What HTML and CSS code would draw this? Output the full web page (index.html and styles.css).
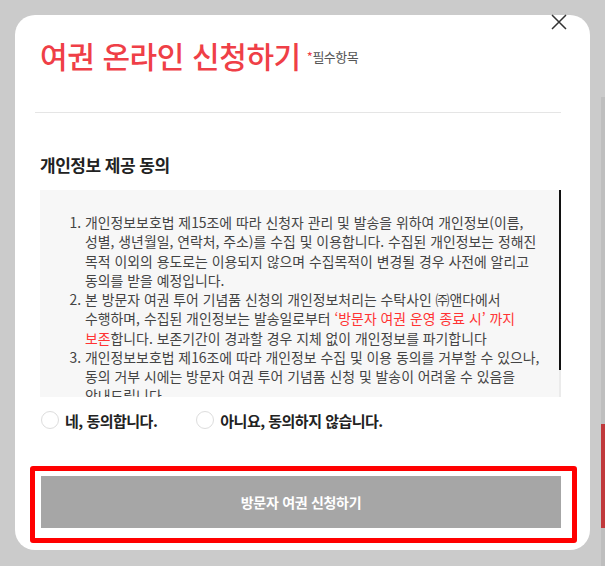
FILE: index.html
```html
<!DOCTYPE html>
<html lang="ko">
<head>
    <meta charset="UTF-8">
    <meta name="viewport" content="width=device-width, initial-scale=1.0">
    <title>여권 온라인 신청하기</title>
    <link rel="stylesheet" href="styles.css">
</head>
<body>
    <div class="modal">
        <button class="btn-close" aria-label="닫기">
            <svg width="16" height="16" viewBox="0 0 16 16">
                <path d="M1 1L15 15M15 1L1 15" stroke="#333" stroke-width="1.5" fill="none"/>
            </svg>
        </button>

        <div class="modal-header">
            <h1 class="title">여권 온라인 신청하기</h1>
            <span class="required"><em>*</em>필수항목</span>
        </div>

        <h2 class="section-title">개인정보 제공 동의</h2>

        <div class="terms">
            <div class="terms-body">
                <ol>
                    <li>개인정보보호법 제15조에 따라 신청자 관리 및 발송을 위하여 개인정보(이름,<br>
                        성별, 생년월일, 연락처, 주소)를 수집 및 이용합니다. 수집된 개인정보는 정해진<br>
                        목적 이외의 용도로는 이용되지 않으며 수집목적이 변경될 경우 사전에 알리고<br>
                        동의를 받을 예정입니다.</li>
                    <li>본 방문자 여권 투어 기념품 신청의 개인정보처리는 수탁사인 ㈜앤다에서<br>
                        수행하며, 수집된 개인정보는 발송일로부터 <span class="point">‘방문자 여권 운영 종료 시’ 까지<br>
                        보존</span>합니다. 보존기간이 경과할 경우 지체 없이 개인정보를 파기합니다</li>
                    <li>개인정보보호법 제16조에 따라 개인정보 수집 및 이용 동의를 거부할 수 있으나,<br>
                        동의 거부 시에는 방문자 여권 투어 기념품 신청 및 발송이 어려울 수 있음을<br>
                        안내드립니다.</li>
                </ol>
            </div>
            <div class="terms-bar">
                <div class="terms-thumb"></div>
            </div>
        </div>

        <div class="agree">
            <label class="radio"><input type="radio" name="agree"><span>네, 동의합니다.</span></label>
            <label class="radio"><input type="radio" name="agree"><span>아니요, 동의하지 않습니다.</span></label>
        </div>

        <div class="submit-wrap">
            <button class="btn-submit">방문자 여권 신청하기</button>
        </div>
    </div>

    <div class="page-scroll">
        <div class="page-thumb"></div>
    </div>
</body>
</html>
```

FILE: styles.css
```css
* {
    box-sizing: border-box;
}

body {
    font-family: "Noto Sans CJK KR", "Noto Sans", sans-serif;
    background-color: #cbcbcb;
    display: flex;
    align-items: flex-start;
    height: 100vh;
    margin: 0;
    overflow: hidden;
    color: #222;
}

.modal {
    position: relative;
    width: 575px;
    margin: 15px 0 0 15px;
    padding: 25px 29px 7px 25px;
    background: #fff;
    border-radius: 20px;
}

.btn-close {
    position: absolute;
    top: -1px;
    right: 23px;
    width: 16px;
    height: 16px;
    padding: 0;
    border: none;
    background: none;
    cursor: pointer;
}

.btn-close svg {
    display: block;
}

.modal-header {
    display: flex;
    align-items: center;
    height: 73px;
    padding-bottom: 43px;
    border-bottom: 1px solid #e5e5e5;
    margin-left: -5px;
}

.title {
    margin: 0 0 0 5px;
    font-size: 30px;
    line-height: 30px;
    font-weight: 500;
    letter-spacing: -0.4px;
    color: #ef3f47;
}

.required {
    margin: 4px 0 0 6px;
    font-size: 13px;
    letter-spacing: -0.5px;
    color: #555;
}

.required em {
    font-style: normal;
    color: #ef3f47;
}

.section-title {
    margin: 40px 0 13px;
    font-size: 17px;
    line-height: 24px;
    font-weight: 700;
    letter-spacing: -0.5px;
    color: #222;
}

.terms {
    display: flex;
    height: 207px;
    background: #f7f7f7;
}

.terms-body {
    flex: 1;
    overflow: hidden;
    padding: 23px 10px 0 32px;
    font-size: 13.9px;
    line-height: 19.25px;
    color: #444;
}

.terms-bar {
    width: 2px;
    background: #ebebeb;
}

.terms-thumb {
    height: 180px;
    background: #111;
}

.terms ol {
    margin: 0;
    padding-left: 13px;
}

.terms li {
    white-space: nowrap;
}

.point {
    color: #f33;
}

.agree {
    display: flex;
    gap: 38px;
    height: 24px;
    margin-top: 11px;
    align-items: center;
}

.radio {
    display: flex;
    align-items: center;
    gap: 6px;
    font-size: 15px;
    font-weight: 700;
    letter-spacing: -0.5px;
    color: #222;
    cursor: pointer;
}

.radio input {
    appearance: none;
    flex-shrink: 0;
    width: 18px;
    height: 18px;
    margin: 0 0 0 1px;
    border: 1px solid #ddd;
    border-radius: 50%;
    background: #fff;
}

.submit-wrap {
    margin: 34px -16px 0 -10px;
    padding: 5px 11px 10px 6px;
    border: 5px solid #f00;
    border-radius: 3px;
}

.btn-submit {
    display: block;
    width: 100%;
    height: 52px;
    border: none;
    background: #a6a6a6;
    font-family: inherit;
    font-size: 14px;
    font-weight: 700;
    letter-spacing: -0.3px;
    color: #fff;
    cursor: pointer;
}

.page-scroll {
    width: 4px;
    height: 469px;
    margin: 97px 0 0 auto;
    padding-top: 327px;
    background: #bebebe;
}

.page-thumb {
    height: 104px;
    background: #c0393b;
}
```
